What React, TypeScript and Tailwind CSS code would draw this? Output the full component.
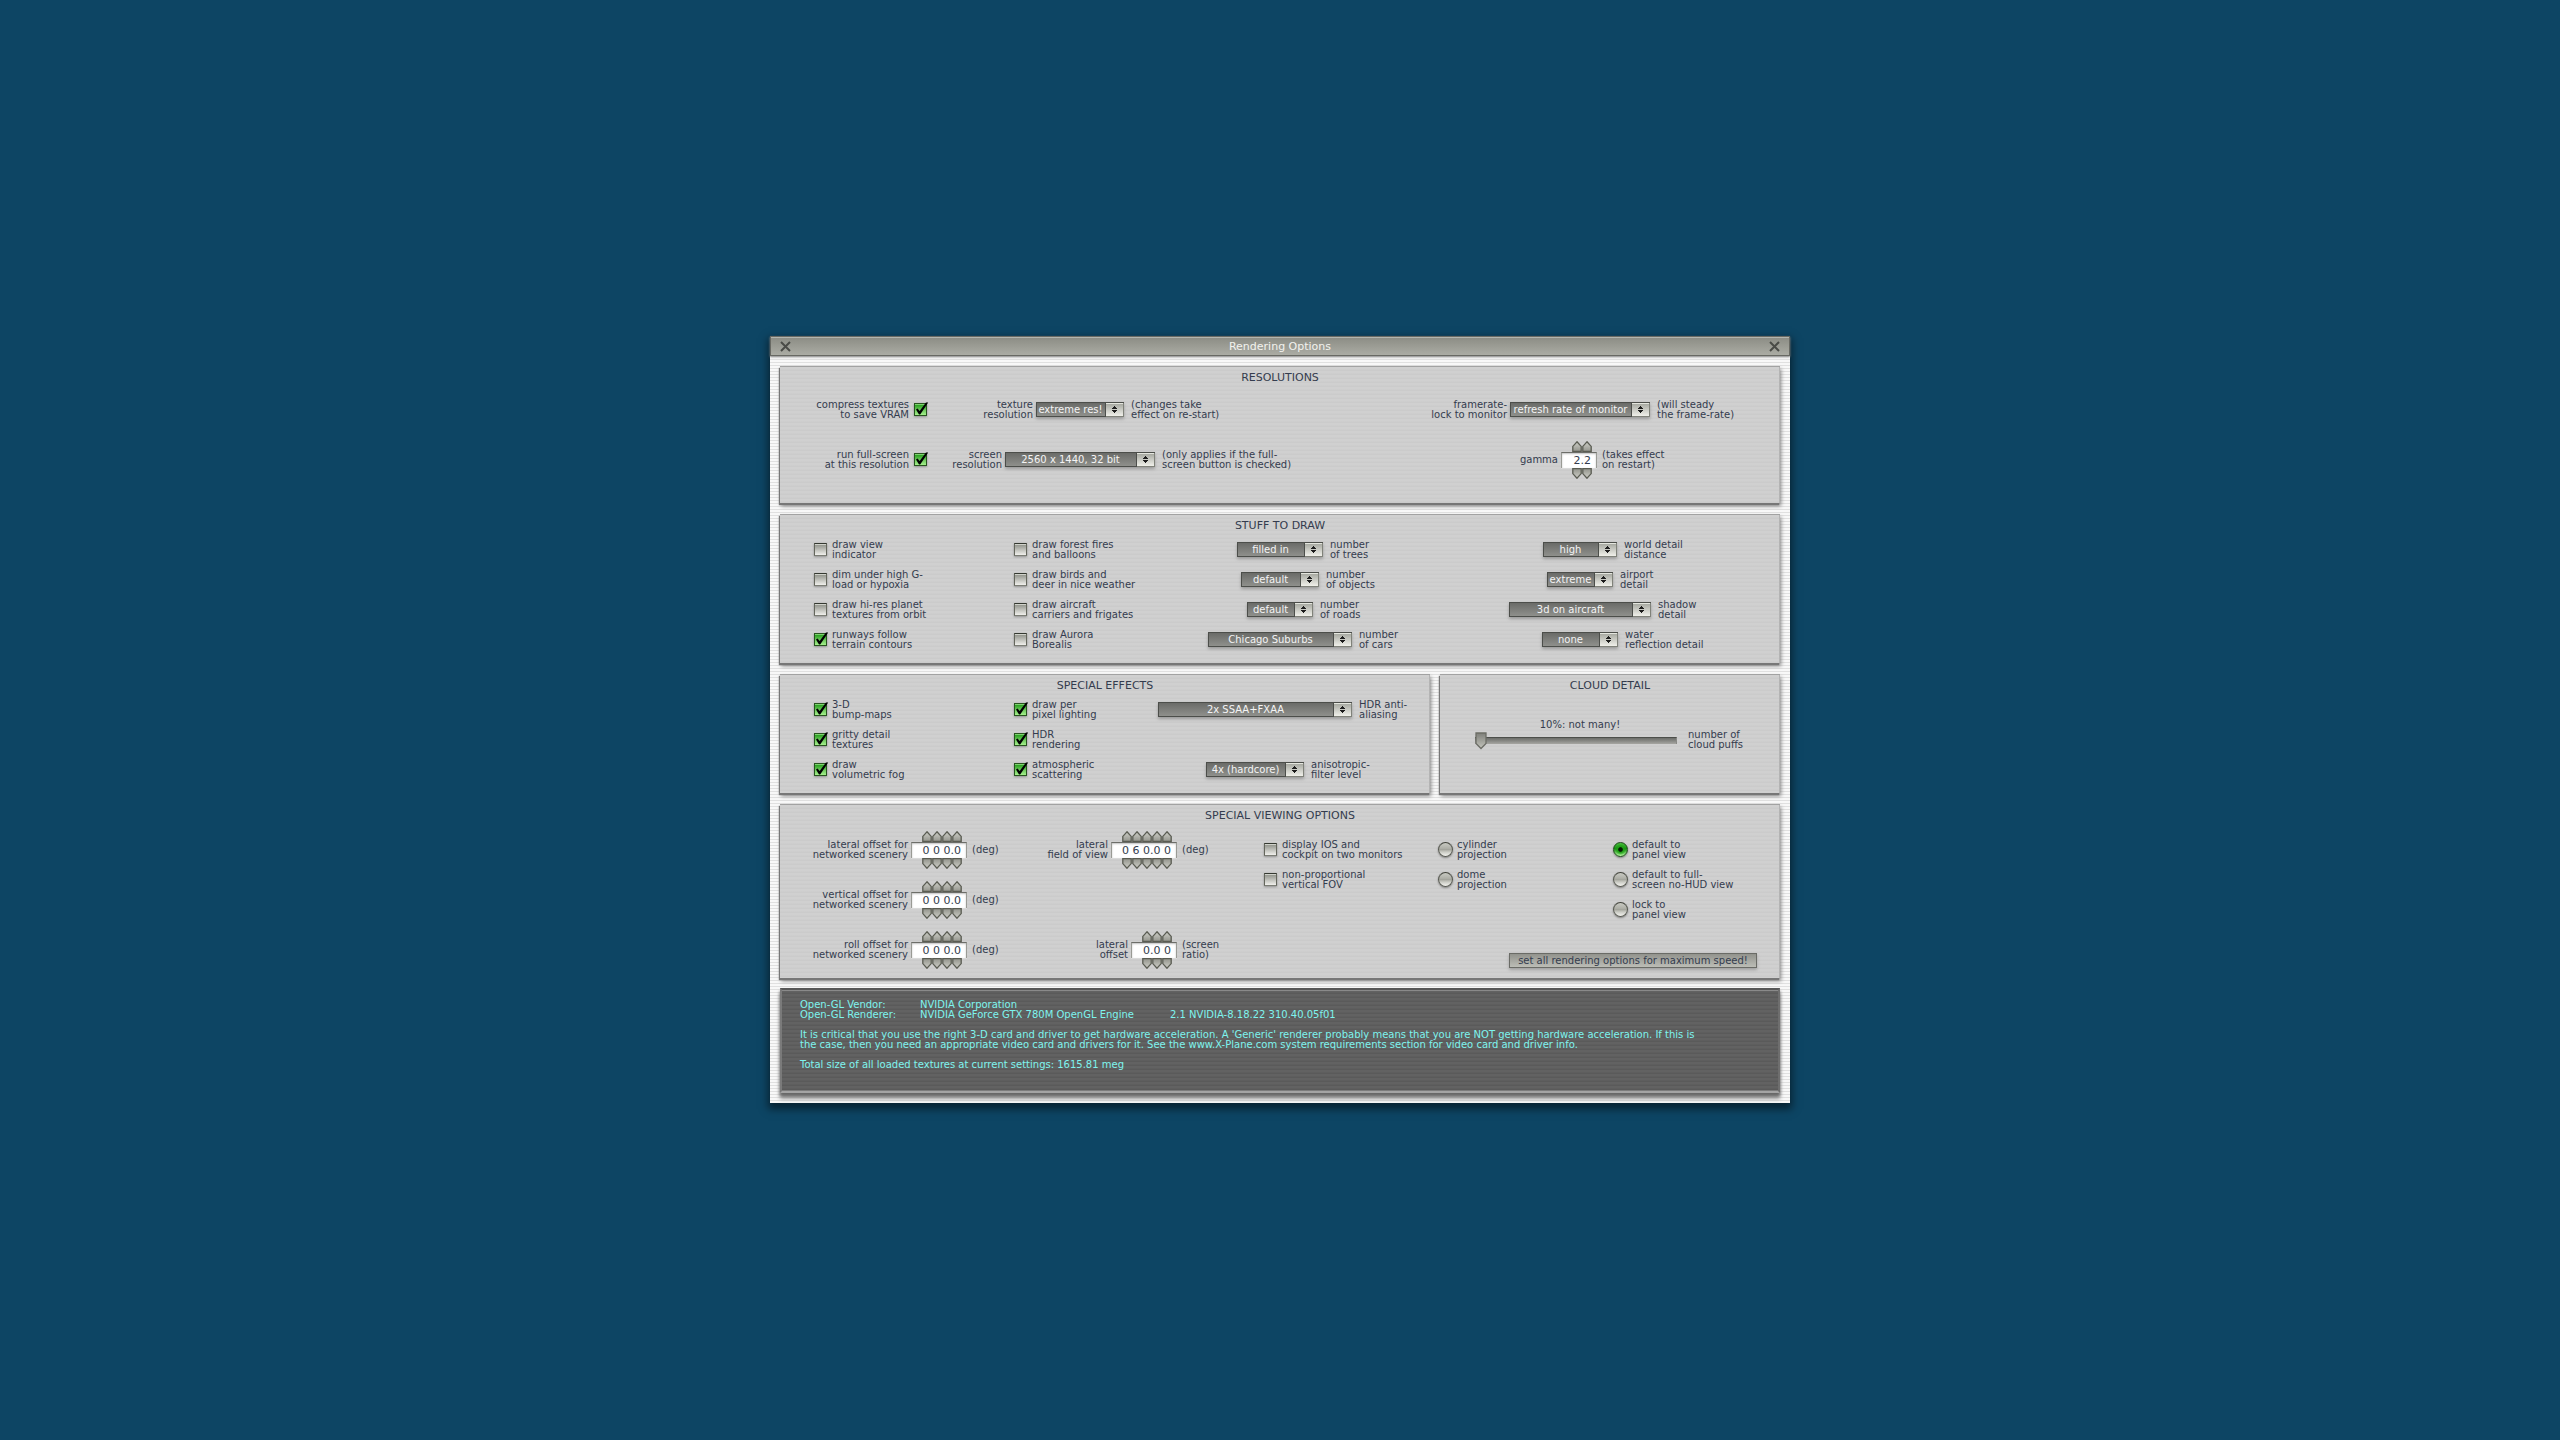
import { useId, useState } from 'react';

type Lines = string[];

const panelStyle =
  'border-t border-t-[#a2a2a2] bg-[repeating-linear-gradient(180deg,#d0d0d0_0px,#d0d0d0_2px,#cbcbcb_3px,#cbcbcb_4px)] shadow-[inset_-1px_0_0_#b4b4b4,-1px_2px_1px_#777777,1px_3px_4px_#808080]';

const Label: React.FC<{ lines: Lines; right?: boolean; htmlFor?: string }> = ({ lines, right, htmlFor }) => (
  <label htmlFor={htmlFor} className={`block whitespace-nowrap leading-[10px] ${right ? 'text-right' : ''}`}>
    {lines.map((line, i) => (
      <span key={i} className="block">{line}</span>
    ))}
  </label>
);

interface PanelProps {
  title: string;
  className?: string;
  children: React.ReactNode;
}

const Panel: React.FC<PanelProps> = ({ title, className = '', children }) => (
  <section className={`${panelStyle} ${className}`}>
    <h2 className="pt-[6px] text-center text-[11px] leading-[10px]">{title}</h2>
    {children}
  </section>
);

interface CheckProps {
  lines: Lines;
  checked?: boolean;
  labelFirst?: boolean;
}

const Check: React.FC<CheckProps> = ({ lines, checked = false, labelFirst }) => {
  const id = useId();
  const [on, setOn] = useState<boolean>(checked);

  return (
    <div className={`flex h-[30px] items-center gap-[5px] ${labelFirst ? 'flex-row-reverse' : ''}`}>
      <span className="relative mb-px flex h-[13px] w-[13px] shrink-0">
        <input
          id={id}
          type="checkbox"
          checked={on}
          onChange={(e) => setOn(e.target.checked)}
          className="h-[13px] w-[13px] appearance-none border border-t-[#343830] border-r-[#64665c] border-b-[#7c7e76] border-l-[#64665c] bg-linear-to-b from-[#8c8e86] to-[#f0f0ec] shadow-[inset_0_1px_0_#d0d2ca,0_1px_2px_#909090] checked:border-[#27541e] checked:from-[#0d9a0a] checked:to-[#a4f08c] checked:shadow-[inset_0_1px_0_#7fd070,0_1px_2px_#909090]"
        />
        {on && (
          <svg className="pointer-events-none absolute -top-px left-0" width="15" height="14" viewBox="0 0 15 14">
            <path d="M2 7.4 L3.6 6.4 L5.6 9 L12 0.4 L14.2 0.4 L6.2 12.6 L5 12.6 Z" fill="#000" />
          </svg>
        )}
      </span>
      <Label lines={lines} right={labelFirst} htmlFor={id} />
    </div>
  );
};

interface RadioProps {
  lines: Lines;
  name: string;
  checked?: boolean;
}

const Radio: React.FC<RadioProps> = ({ lines, name, checked }) => {
  const id = useId();

  return (
    <div className="flex h-[30px] items-center gap-1">
      <input
        id={id}
        type="radio"
        name={name}
        defaultChecked={checked}
        className="mb-px h-[15px] w-[15px] shrink-0 appearance-none rounded-full border border-[#585a52] border-t-[#40423a] bg-[linear-gradient(180deg,#c8c9c2_0%,#b0b1a9_40%,#a4a59d_50%,#cccdc6_70%,#f4f4f0_100%)] shadow-[0_1px_2px_#808080] checked:border-[#1c4a18] checked:bg-[radial-gradient(circle,#041c02_0%,#041c02_20%,#1fa015_30%,transparent_60%),linear-gradient(180deg,#4cc040,#149010_45%,#b4f8a0)]"
      />
      <Label lines={lines} htmlFor={id} />
    </div>
  );
};

interface PickProps {
  value: string;
  width: string;
  id?: string;
}

const Pick: React.FC<PickProps> = ({ value, width, id }) => (
  <span className={`relative mb-px flex h-[15px] shadow-[0_2px_3px_#9a9a9a] ${width}`}>
    <select
      id={id}
      className="h-[15px] w-full appearance-none border border-[#4c4e4a] bg-[linear-gradient(180deg,#6a6b68,#8f908c)] pr-[19px] text-center leading-[13px] text-[#f4f4f4] [text-align-last:center]"
    >
      <option>{value}</option>
    </select>
    <svg className="pointer-events-none absolute top-0 right-0" width="19" height="15" viewBox="0 0 19 15" shapeRendering="crispEdges">
      <defs>
        <linearGradient id="knob" x1="0" y1="0" x2="0" y2="1">
          <stop offset="0" stopColor="#a2a49c" />
          <stop offset="1" stopColor="#f0f0ea" />
        </linearGradient>
      </defs>
      <rect width="19" height="15" fill="#4c4e4a" />
      <rect x="1" y="1" width="17" height="13" fill="url(#knob)" />
      <path d="M1 1.5 H18" stroke="#e4e6de" />
      <path d="M18.5 1 V15 M1 14.5 H19" stroke="#80827a" />
      <path d="M9 4h1v1h1v1h1v1H7V6h1V5h1z M7 8h5v1h-1v1h-1v1H9v-1H8V9H7z" fill="#1c1c1c" />
    </svg>
  </span>
);

interface DropProps {
  value: string;
  width: string;
  before?: Lines;
  after: Lines;
  height?: string;
}

const Drop: React.FC<DropProps> = ({ value, width, before, after, height = 'h-[30px]' }) => {
  const id = useId();

  return (
    <div className={`grid grid-cols-[minmax(0,1fr)_auto_minmax(0,1fr)] items-center ${height}`}>
      <div className="flex justify-end pr-[3px]">{before && <Label lines={before} right htmlFor={id} />}</div>
      <Pick id={id} value={value} width={width} />
      <div className="pl-[7px]">
        <Label lines={after} htmlFor={id} />
      </div>
    </div>
  );
};

const Arrow: React.FC<{ down?: boolean }> = ({ down }) => (
  <svg className={`block ${down ? 'rotate-180' : ''}`} width="10" height="11" viewBox="0 0 10 11">
    <defs>
      <linearGradient id="arrow" x1="0" y1="0" x2="0" y2="1">
        <stop offset="0" stopColor="#cfd0c9" />
        <stop offset="1" stopColor="#93948c" />
      </linearGradient>
    </defs>
    <path d="M5 0.8 L9.2 5.4 V10.4 H0.8 V5.4 Z" fill="url(#arrow)" stroke="#5a5c52" strokeWidth="1.3" />
  </svg>
);

const spinnerWidths: Record<number, string> = {
  2: 'w-[36px]',
  3: 'w-[46px]',
  4: 'w-[56px]',
  5: 'w-[66px]',
};

const Spinner: React.FC<{ value: string; digits: number; id?: string }> = ({ value, digits, id }) => {
  const keys = Array.from({ length: digits }, (_, i) => i);

  return (
    <div className={`flex shrink-0 flex-col ${spinnerWidths[digits]}`}>
      <div className="flex justify-end pr-[5px]">
        {keys.map((k) => (
          <button key={k} type="button" aria-label={`increase digit ${k + 1}`}><Arrow /></button>
        ))}
      </div>
      <input
        id={id}
        type="text"
        defaultValue={value}
        className="h-4 w-full border-x border-t border-[#9a9b95] border-t-[#6c6d68] bg-white pr-[5px] text-right text-[11px] leading-[14px] shadow-[inset_0_1px_2px_#c0c0c0,0_1px_0_#dadada]"
      />
      <div className="flex justify-end pr-[5px]">
        {keys.map((k) => (
          <button key={k} type="button" aria-label={`decrease digit ${k + 1}`}><Arrow down /></button>
        ))}
      </div>
    </div>
  );
};

interface NumberRowProps {
  lines: Lines;
  unit: Lines;
  value: string;
  digits: number;
  lead: string;
}

const NumberRow: React.FC<NumberRowProps> = ({ lines, unit, value, digits, lead }) => {
  const id = useId();

  return (
    <div className="flex h-[50px] items-center">
      <div className={`flex shrink-0 items-center justify-end gap-[3px] ${lead}`}>
        <Label lines={lines} right htmlFor={id} />
        <Spinner id={id} value={value} digits={digits} />
      </div>
      <div className="pl-[5px]">
        <Label lines={unit} htmlFor={id} />
      </div>
    </div>
  );
};

const CloudSlider: React.FC = () => {
  const id = useId();
  const [puffs, setPuffs] = useState<number>(10);

  return (
    <div className="grid grid-cols-[202fr_92fr] gap-x-[11px] pt-[29px] pl-[35px]">
      <output htmlFor={id} className="block pl-2 text-center leading-[10px]">{puffs}%: not many!</output>
      <span />
      <span className="relative flex h-[20px] items-center">
        <input
          id={id}
          type="range"
          min={10}
          max={100}
          value={puffs}
          onChange={(e) => setPuffs(Number(e.target.value))}
          className="h-[7px] w-full appearance-none border-t border-r border-t-[#4c4e4a] border-r-[#8a8a86] bg-linear-to-b from-[#6c6d69] to-[#a6a6a2] [&::-webkit-slider-thumb]:h-[17px] [&::-webkit-slider-thumb]:w-3 [&::-webkit-slider-thumb]:appearance-none [&::-webkit-slider-thumb]:bg-transparent"
        />
        <svg
          className="pointer-events-none absolute top-[2px]"
          style={{ left: `${((puffs - 10) / 90) * 94}%` }}
          width="12"
          height="18"
          viewBox="0 0 12 18"
        >
          <defs>
            <linearGradient id="thumb" x1="0" y1="0" x2="0" y2="1">
              <stop offset="0" stopColor="#7e7f79" />
              <stop offset="1" stopColor="#c4c5bd" />
            </linearGradient>
          </defs>
          <path d="M1 1 H11 V11.5 L6 16.5 L1 11.5 Z" fill="url(#thumb)" stroke="#6c6d66" strokeWidth="1.3" />
        </svg>
      </span>
      <span className="flex items-center">
        <Label lines={['number of', 'cloud puffs']} htmlFor={id} />
      </span>
    </div>
  );
};

const CloseButton: React.FC = () => (
  <button type="button" aria-label="close" className="flex h-[17px] w-[11px] items-center">
    <svg width="11" height="11" viewBox="0 0 11 11">
      <path d="M1 1 L10 10 M10 1 L1 10" stroke="#4a4b47" strokeWidth="2" />
    </svg>
  </button>
);

const DriverInfo: React.FC = () => (
  <section className="mt-[10px] h-[105px] border-2 border-t-[#585858] border-r-[#6e6e6e] border-b-[#a4a4a4] border-l-[#7a7a7a] bg-[repeating-linear-gradient(180deg,#626262_0px,#626262_2px,#5a5a5a_3px,#5a5a5a_4px)] px-[18px] pt-[10px] leading-[10px] text-[#7ef4ee] shadow-[inset_0_1px_0_#8a8a8a,inset_0_-1px_0_#7c7c7c,0_3px_3px_#666666,0_6px_4px_#9a9a9a]">
    <dl className="grid grid-cols-[120px_250px_1fr]">
      <dt>Open-GL Vendor:</dt>
      <dd>NVIDIA Corporation</dd>
      <dd />
      <dt>Open-GL Renderer:</dt>
      <dd>NVIDIA GeForce GTX 780M OpenGL Engine</dd>
      <dd>2.1 NVIDIA-8.18.22 310.40.05f01</dd>
    </dl>
    <p className="mt-[10px]">
      It is critical that you use the right 3-D card and driver to get hardware acceleration. A 'Generic' renderer probably means that you are NOT getting hardware acceleration. If this is
      <br />
      the case, then you need an appropriate video card and drivers for it. See the www.X-Plane.com system requirements section for video card and driver info.
    </p>
    <p className="mt-[10px]">Total size of all loaded textures at current settings: 1615.81 meg</p>
  </section>
);

export default function App() {
  return (
    <div className="flex min-h-screen items-center justify-center bg-[#0d4564] pb-px font-['DejaVu_Sans',sans-serif] text-[10px] text-[#343c4e]">
      <main className="w-full max-w-[1020px] bg-[repeating-linear-gradient(180deg,#f8f8f8_0px,#f8f8f8_2px,#e0e0e0_2px,#e0e0e0_3px)] pb-[10px] shadow-[0_4px_8px_2px_rgba(0,0,0,0.5)]">
        <header className="flex h-[20px] items-center justify-between border border-[#686963] bg-linear-to-b from-[#8b8c84] to-[#abaca4] px-[9px] shadow-[inset_0_1px_0_#b4b5ae,0_1px_2px_#8a8a8a]">
          <CloseButton />
          <h1 className="pt-px text-[11px] leading-[14px] text-[#f2f2ee]">Rendering Options</h1>
          <CloseButton />
        </header>

        <div className="px-[10px] pt-[10px]">
          <Panel title="RESOLUTIONS" className="h-[137px]">
            <div className="grid grid-cols-[147fr_306fr_147fr_400fr] pt-[2px] *:min-w-0">
              <div className="flex h-[50px] items-center justify-end">
                <Check labelFirst checked lines={['compress textures', 'to save VRAM']} />
              </div>
              <Drop height="h-[50px]" value="extreme res!" width="w-[88px]" before={['texture', 'resolution']} after={['(changes take', 'effect on re-start)']} />
              <div className="col-start-4">
                <Drop height="h-[50px]" value="refresh rate of monitor" width="w-[140px]" before={['framerate-', 'lock to monitor']} after={['(will steady', 'the frame-rate)']} />
              </div>
              <div className="flex h-[50px] items-center justify-end">
                <Check labelFirst checked lines={['run full-screen', 'at this resolution']} />
              </div>
              <Drop height="h-[50px]" value="2560 x 1440, 32 bit" width="w-[150px]" before={['screen', 'resolution']} after={['(only applies if the full-', 'screen button is checked)']} />
              <div className="col-start-4">
                <NumberRow lines={['gamma']} unit={['(takes effect', 'on restart)']} value="2.2" digits={2} lead="w-[217px]" />
              </div>
            </div>
          </Panel>

          <Panel title="STUFF TO DRAW" className="mt-[11px] h-[149px]">
            <div className="grid grid-cols-[200fr_126fr_280fr_320fr] pt-[4px] pr-[40px] pl-[34px] *:min-w-0">
              <Check lines={['draw view', 'indicator']} />
              <Check lines={['draw forest fires', 'and balloons']} />
              <Drop value="filled in" width="w-[86px]" after={['number', 'of trees']} />
              <Drop value="high" width="w-[74px]" after={['world detail', 'distance']} />
              <Check lines={['dim under high G-', 'load or hypoxia']} />
              <Check lines={['draw birds and', 'deer in nice weather']} />
              <Drop value="default" width="w-[78px]" after={['number', 'of objects']} />
              <Drop value="extreme" width="w-[66px]" after={['airport', 'detail']} />
              <Check lines={['draw hi-res planet', 'textures from orbit']} />
              <Check lines={['draw aircraft', 'carriers and frigates']} />
              <Drop value="default" width="w-[66px]" after={['number', 'of roads']} />
              <Drop value="3d on aircraft" width="w-[142px]" after={['shadow', 'detail']} />
              <Check checked lines={['runways follow', 'terrain contours']} />
              <Check lines={['draw Aurora', 'Borealis']} />
              <Drop value="Chicago Suburbs" width="w-[144px]" after={['number', 'of cars']} />
              <Drop value="none" width="w-[76px]" after={['water', 'reflection detail']} />
            </div>
          </Panel>

          <div className="mt-[11px] grid grid-cols-[650fr_340fr] gap-[10px] *:min-w-0">
            <Panel title="SPECIAL EFFECTS" className="h-[119px]">
              <div className="grid grid-cols-[200fr_86fr_310fr] pt-[4px] pr-[20px] pl-[34px] *:min-w-0">
                <Check checked lines={['3-D', 'bump-maps']} />
                <Check checked lines={['draw per', 'pixel lighting']} />
                <Drop value="2x SSAA+FXAA" width="w-[194px]" after={['HDR anti-', 'aliasing']} />
                <Check checked lines={['gritty detail', 'textures']} />
                <Check checked lines={['HDR', 'rendering']} />
                <div className="col-start-1">
                  <Check checked lines={['draw', 'volumetric fog']} />
                </div>
                <Check checked lines={['atmospheric', 'scattering']} />
                <Drop value="4x (hardcore)" width="w-[98px]" after={['anisotropic-', 'filter level']} />
              </div>
            </Panel>
            <Panel title="CLOUD DETAIL" className="h-[119px]">
              <CloudSlider />
            </Panel>
          </div>

          <Panel title="SPECIAL VIEWING OPTIONS" className="mt-[11px] h-[174px]">
            <div className="grid grid-cols-[207fr_277fr_516fr] pt-[4px] *:min-w-0">
              <div>
                <NumberRow lines={['lateral offset for', 'networked scenery']} unit={['(deg)']} value="0 0 0.0" digits={4} lead="w-[187px]" />
                <NumberRow lines={['vertical offset for', 'networked scenery']} unit={['(deg)']} value="0 0 0.0" digits={4} lead="w-[187px]" />
                <NumberRow lines={['roll offset for', 'networked scenery']} unit={['(deg)']} value="0 0 0.0" digits={4} lead="w-[187px]" />
              </div>
              <div className="flex flex-col justify-between">
                <NumberRow lines={['lateral', 'field of view']} unit={['(deg)']} value="0 6 0.0 0" digits={5} lead="w-[190px]" />
                <NumberRow lines={['lateral', 'offset']} unit={['(screen', 'ratio)']} value="0.0 0" digits={3} lead="w-[190px]" />
              </div>
              <div className="flex flex-col pt-[10px]">
                <div className="grid grid-cols-[174fr_175fr_167fr] *:min-w-0">
                  <div>
                    <Check lines={['display IOS and', 'cockpit on two monitors']} />
                    <Check lines={['non-proportional', 'vertical FOV']} />
                  </div>
                  <div>
                    <Radio name="projection" lines={['cylinder', 'projection']} />
                    <Radio name="projection" lines={['dome', 'projection']} />
                  </div>
                  <div>
                    <Radio name="view" checked lines={['default to', 'panel view']} />
                    <Radio name="view" lines={['default to full-', 'screen no-HUD view']} />
                    <Radio name="view" lines={['lock to', 'panel view']} />
                  </div>
                </div>
                <button
                  type="button"
                  className="mt-7 mr-[23px] h-[15px] w-[248px] self-end border border-[#6a6b66] bg-linear-to-b from-[#92938d] to-[#bcbdb6] leading-[13px] whitespace-nowrap shadow-[0_2px_3px_#a0a0a0]"
                >
                  set all rendering options for maximum speed!
                </button>
              </div>
            </div>
          </Panel>

          <DriverInfo />
        </div>
      </main>
    </div>
  );
}
